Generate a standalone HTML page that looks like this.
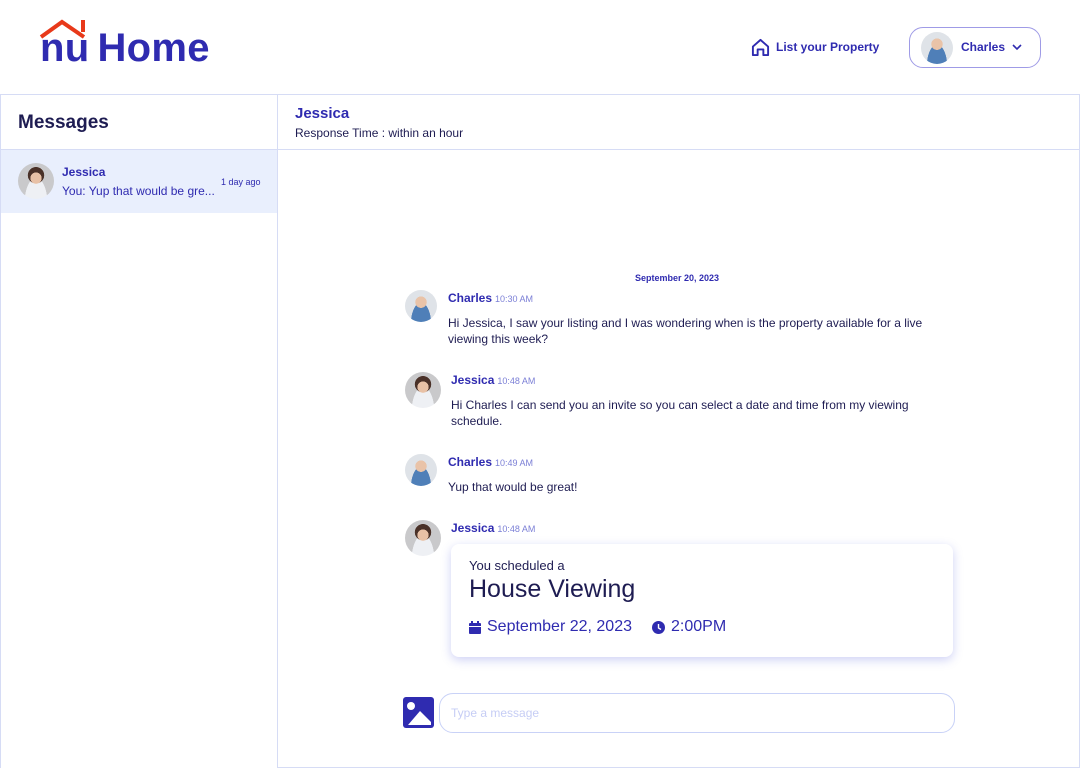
<!DOCTYPE html>
<html><head><meta charset="utf-8"><style>
*{box-sizing:border-box;margin:0;padding:0}
body{width:1080px;height:768px;background:#fff;font-family:"Liberation Sans",sans-serif;position:relative;overflow:hidden;color:#1e1c52}
.abs{position:absolute}
.p{color:#2f2bb0}
.av{position:absolute;border-radius:50%;overflow:hidden;background:radial-gradient(circle at 50% 38%,#e9c3a8 0 22%,transparent 23%),radial-gradient(ellipse at 50% 110%,#4f7fb8 0 45%,transparent 46%),#dfe3e8}
.avj{background:radial-gradient(circle at 50% 42%,#e8c1a6 0 20%,transparent 21%),radial-gradient(circle at 50% 34%,#4a3128 0 27%,transparent 28%),radial-gradient(ellipse at 50% 115%,#eef0f4 0 45%,transparent 46%),#c9c9cb}
.name{font-weight:bold;font-size:12px;color:#2f2bb0}
.time{font-size:9px;color:#7b7fd6;font-weight:normal;margin-left:3px}
.msg{font-size:12px;color:#1e1c52;line-height:16px}
</style></head><body>
<svg class="abs" style="left:38px;top:18px" width="56" height="22" viewBox="0 0 56 22"><path d="M3 19 L24 4 L46 19" fill="none" stroke="#e8391a" stroke-width="4"/><rect x="43" y="2" width="4" height="12" fill="#e8391a"/></svg>
<div class="abs p" style="left:40px;top:26px;font-size:40px;font-weight:bold;letter-spacing:0.3px">nu<span style="margin-left:8px">Home</span></div>
<svg class="abs" style="left:751px;top:38px" width="19" height="19" viewBox="0 0 20 20"><path d="M2 9 L10 2 L18 9 V18 H13 V12 H7 V18 H2 Z" fill="none" stroke="#2f2bb0" stroke-width="2" stroke-linejoin="round"/></svg>
<div class="abs p" style="left:776px;top:40px;font-size:12px;font-weight:bold">List your Property</div>
<div class="abs" style="left:909px;top:27px;width:132px;height:41px;border:1px solid #9f9be6;border-radius:14px"></div>
<div class="av" style="left:921px;top:32px;width:32px;height:32px"></div>
<div class="abs p" style="left:961px;top:40px;font-size:12px;font-weight:bold">Charles</div>
<svg class="abs" style="left:1012px;top:43px" width="10" height="8"><path d="M1 2 L5 6 L9 2" fill="none" stroke="#2f2bb0" stroke-width="1.6"/></svg>
<div class="abs" style="left:0;top:94px;width:1080px;height:1px;background:#d6dcf5"></div>
<div class="abs" style="left:0;top:149px;width:1080px;height:1px;background:#d6dcf5"></div>
<div class="abs" style="left:0;top:94px;width:1px;height:674px;background:#d6dcf5"></div>
<div class="abs" style="left:277px;top:94px;width:1px;height:674px;background:#d6dcf5"></div>
<div class="abs" style="left:1079px;top:94px;width:1px;height:674px;background:#d6dcf5"></div>
<div class="abs" style="left:278px;top:767px;width:802px;height:1px;background:#d6dcf5"></div>
<div class="abs" style="left:18px;top:112px;font-size:19px;font-weight:bold;color:#1e1c52">Messages</div>
<div class="abs" style="left:1px;top:150px;width:276px;height:63px;background:#e9effd"></div>
<div class="av avj" style="left:18px;top:163px;width:36px;height:36px"></div>
<div class="abs name" style="left:62px;top:165px">Jessica</div>
<div class="abs p" style="left:62px;top:184px;font-size:12px">You: Yup that would be gre...</div>
<div class="abs p" style="left:221px;top:177px;font-size:9px">1 day ago</div>
<div class="abs" style="left:295px;top:105px;font-size:15px;font-weight:bold;color:#2f2bb0">Jessica</div>
<div class="abs" style="left:295px;top:126px;font-size:12px;color:#1e1c52">Response Time : within an hour</div>
<div class="abs p" style="left:635px;top:273px;font-size:9px;font-weight:bold">September 20, 2023</div>
<div class="av" style="left:405px;top:290px;width:32px;height:32px"></div>
<div class="abs name" style="left:448px;top:291px">Charles<span class="time">10:30 AM</span></div>
<div class="abs msg" style="left:448px;top:315px;width:500px">Hi Jessica, I saw your listing and I was wondering when is the property available for a live viewing this week?</div>
<div class="av avj" style="left:405px;top:372px;width:36px;height:36px"></div>
<div class="abs name" style="left:451px;top:373px">Jessica<span class="time">10:48 AM</span></div>
<div class="abs msg" style="left:451px;top:397px;width:500px">Hi Charles I can send you an invite so you can select a date and time from my viewing schedule.</div>
<div class="av" style="left:405px;top:454px;width:32px;height:32px"></div>
<div class="abs name" style="left:448px;top:455px">Charles<span class="time">10:49 AM</span></div>
<div class="abs msg" style="left:448px;top:479px">Yup that would be great!</div>
<div class="av avj" style="left:405px;top:520px;width:36px;height:36px"></div>
<div class="abs name" style="left:451px;top:521px">Jessica<span class="time">10:48 AM</span></div>
<div class="abs" style="left:451px;top:544px;width:502px;height:113px;border-radius:8px;background:#fff;box-shadow:0 3px 10px rgba(80,90,220,.28)"></div>
<div class="abs" style="left:469px;top:558px;font-size:13px;color:#1e1c52">You scheduled a</div>
<div class="abs" style="left:469px;top:575px;font-size:25px;color:#1e1c52">House Viewing</div>
<svg class="abs" style="left:469px;top:621px" width="12" height="13"><rect x="0" y="2" width="12" height="11" rx="1" fill="#2f2bb0"/><rect x="2" y="0" width="2" height="3" fill="#2f2bb0"/><rect x="8" y="0" width="2" height="3" fill="#2f2bb0"/><rect x="0" y="5" width="12" height="1" fill="#fff"/></svg>
<div class="abs p" style="left:487px;top:618px;font-size:16px">September 22, 2023</div>
<svg class="abs" style="left:652px;top:621px" width="13" height="13"><circle cx="6.5" cy="6.5" r="6.5" fill="#2f2bb0"/><path d="M6.5 3 V7 L9 8.5" stroke="#fff" stroke-width="1.4" fill="none"/></svg>
<div class="abs p" style="left:671px;top:618px;font-size:16px">2:00PM</div>
<svg class="abs" style="left:403px;top:697px" width="31" height="31"><rect width="31" height="31" rx="3" fill="#2f2bb0"/><circle cx="8" cy="9" r="4" fill="#fff"/><path d="M5 28 L17 14 L28 25 V28 Z" fill="#fff"/></svg>
<div class="abs" style="left:439px;top:693px;width:516px;height:40px;border:1px solid #c9d2f7;border-radius:14px"></div>
<div class="abs" style="left:451px;top:706px;font-size:12px;color:#c6cdf5">Type a message</div>
</body></html>
